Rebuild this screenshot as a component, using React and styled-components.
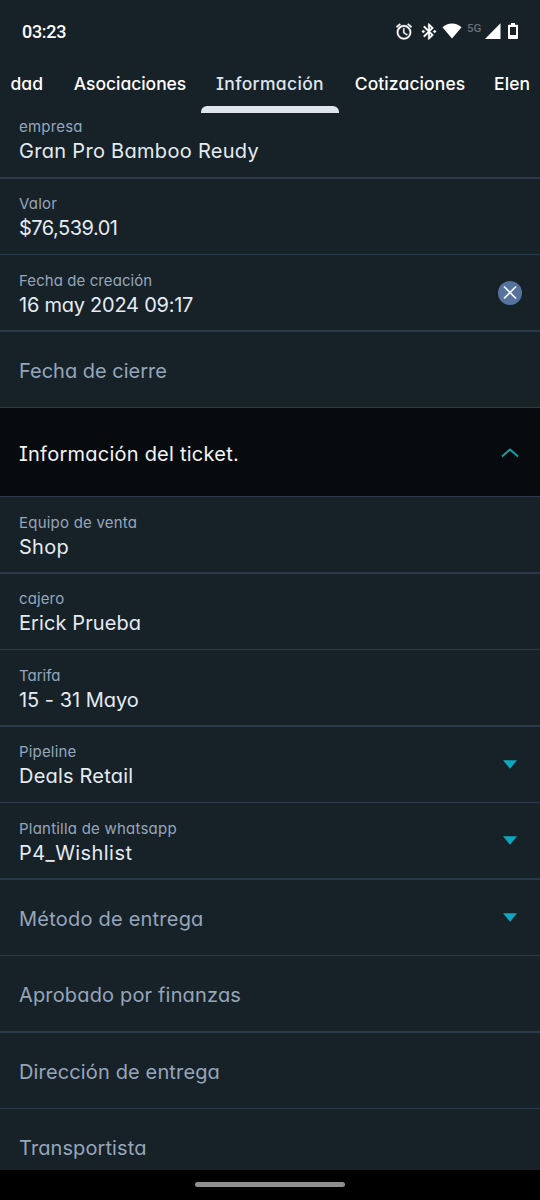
import React from 'react';
import styled, { createGlobalStyle } from 'styled-components';

const GlobalStyle = createGlobalStyle`
  * { box-sizing: border-box; }
  body {
    margin: 0;
    background: #172128;
    font-family: Inter, "Liberation Sans", sans-serif;
    font-feature-settings: "cv08", "cv11";
  }
`;

const Screen = styled.div`
  width: 540px;
  height: 1200px;
  display: flex;
  flex-direction: column;
  overflow: hidden;
  background: #172128;
`;

const StatusBar = styled.header`
  height: 62px;
  flex: none;
  display: flex;
  align-items: center;
  justify-content: space-between;
  padding: 0 22px;
`;

const Clock = styled.span`
  font: 500 18px/24px Roboto, sans-serif;
  letter-spacing: -0.3px;
  padding-top: 1px;
  color: #fff;
`;

const StatusIcons = styled.div`
  display: flex;
  align-items: center;
  height: 24px;
  svg { display: block; fill: #fff; }
`;

const IconGap = styled.span`
  width: ${p => p.$w}px;
`;

const Network = styled.span`
  font: 500 11.5px/12px Roboto, sans-serif;
  color: #687078;
  margin-bottom: 7px;
  width: 18px;
`;

const Tabs = styled.nav`
  height: 51px;
  flex: none;
  display: flex;
`;

const Tab = styled.div`
  flex: none;
  width: ${p => p.$width}px;
  display: flex;
  flex-direction: column;
  align-items: ${p => p.$align || 'center'};
  justify-content: space-between;
  padding: 10px 0 0 ${p => p.$inset || 0}px;
  white-space: nowrap;
  font-size: 17.5px;
  line-height: 24px;
  font-weight: 500;
  letter-spacing: ${p => p.$track}px;
  color: ${p => (p.$active ? '#dfe5ed' : '#fff')};
`;

const Indicator = styled.span`
  width: 138px;
  height: 7px;
  border-radius: 6px 6px 0 0;
  background: #dfe5ed;
`;

const Fields = styled.main`
  flex: 1;
  min-height: 0;
  overflow: hidden;
`;

const Row = styled.div`
  height: ${p => p.$height}px;
  margin-top: ${p => p.$offset || 0}px;
  border-bottom: ${p => p.$line}px solid #2c3947;
  display: flex;
  align-items: center;
  justify-content: space-between;
  padding: 0 18px 0 19px;
`;

const Texts = styled.div`
  display: flex;
  flex-direction: column;
  padding-top: ${p => p.$top}px;
`;

const Label = styled.span`
  font-size: 15px;
  line-height: 20px;
  letter-spacing: ${p => p.$track}px;
  color: #95a6bb;
  white-space: nowrap;
`;

const Value = styled.span`
  font-size: 20px;
  line-height: 28px;
  letter-spacing: ${p => p.$track}px;
  color: #e4ebf2;
  white-space: nowrap;
`;

const Placeholder = styled(Value)`
  padding-top: 2px;
  color: #95a6bb;
`;

const Section = styled(Row)`
  background: #070b0e;
  padding-top: 2px;
`;

const SectionTitle = styled(Value)`
  padding-top: 1px;
  color: #f2f4f5;
`;

const IconSlot = styled.span`
  width: 24px;
  height: 24px;
  display: flex;
  align-items: center;
  justify-content: center;
`;

const NavBar = styled.footer`
  height: 30px;
  flex: none;
  display: flex;
  justify-content: center;
  padding-top: 12px;
  background: #000;
`;

const NavPill = styled.span`
  width: 150px;
  height: 5px;
  border-radius: 3px;
  background: #8f8f8f;
`;

const AlarmIcon = () => (
  <svg width="16" height="17" viewBox="2 1.5 20 21" stroke="#fff" strokeWidth="0.4">
    <path d="M22 5.72l-4.6-3.86-1.29 1.53 4.6 3.86L22 5.72zM7.88 3.39L6.6 1.86 2 5.71l1.29 1.53 4.59-3.85zM12.5 8H11v6l4.75 2.85.75-1.23-4-2.37V8zM12 4c-4.97 0-9 4.03-9 9s4.02 9 9 9a9 9 0 0 0 0-18zm0 16c-3.87 0-7-3.13-7-7s3.13-7 7-7 7 3.13 7 7-3.13 7-7 7z" />
  </svg>
);

const BluetoothIcon = () => (
  <svg width="16" height="17" viewBox="3.5 1.5 17 21" stroke="#fff" strokeWidth="0.4">
    <path d="M7 12l-2-2-2 2 2 2 2-2zm10.71-4.29L12 2h-1v7.59L6.41 5 5 6.41 10.59 12 5 17.59 6.41 19 11 14.41V22h1l5.71-5.71-4.3-4.29 4.3-4.29zM13 5.83l1.88 1.88L13 9.59V5.83zm1.88 10.46L13 18.17v-3.76l1.88 1.88zM19 10l-2 2 2 2 2-2-2-2z" />
  </svg>
);

const WifiIcon = () => (
  <svg width="20" height="16" viewBox="0 0 20 16">
    <path d="M10 15.6L.4 4.2C3 1.7 6.3 .4 10 .4s7 1.3 9.6 3.8z" />
  </svg>
);

const SignalIcon = () => (
  <svg width="16" height="16" viewBox="0 0 16 16">
    <path d="M15.5 .2V16H0z" />
  </svg>
);

const BatteryIcon = () => (
  <svg width="10" height="16" viewBox="0 0 10 16">
    <path fillRule="evenodd" d="M3 0h4v1.700h2.200q.8 0 .8.800v12.700q0 .8-.8.800H.8q-.8 0-.8-.8V2.500q0-.8.8-.8H3zM2 4v8h6V4z" />
  </svg>
);

const ClearIcon = () => (
  <svg width="24" height="24" viewBox="0 0 24 24">
    <circle cx="12" cy="12" r="12" fill="#56749b" />
    <path d="M6 5.500l12 12m0-12l-12 12" stroke="#f2f6fa" strokeWidth="1.700" />
  </svg>
);

const ChevronUp = () => (
  <svg width="18" height="10" viewBox="0 0 18 10" fill="none">
    <path d="M1 8.500l8-7 8 7" stroke="#13a0ac" strokeWidth="1.900" />
  </svg>
);

const Caret = () => (
  <svg width="14" height="9" viewBox="0 0 14 9">
    <path d="M0 .3h14L7 8.700z" fill="#0fa6be" />
  </svg>
);

const fields = [
  { label: 'empresa', lt: 0.2, value: 'Gran Pro Bamboo Reudy', vt: 0.3, height: 76, line: 2, offset: -10, top: 2 },
  { label: 'Valor', lt: 0.2, value: '$76,539.01', vt: -0.5, height: 76, line: 1 },
  { label: 'Fecha de creación', lt: 0.08, value: '16 may 2024 09:17', vt: -0.24, height: 77, line: 2, top: 5, icon: <ClearIcon /> },
  { placeholder: 'Fecha de cierre', vt: 0, height: 76, line: 1 },
  { section: 'Información del ticket.', vt: 0.24, height: 89, line: 1, icon: <ChevronUp /> },
  { label: 'Equipo de venta', lt: 0.22, value: 'Shop', vt: 0.25, height: 77, line: 2, top: 5 },
  { label: 'cajero', lt: 0.12, value: 'Erick Prueba', vt: 0.1, height: 76, line: 1 },
  { label: 'Tarifa', lt: 0, value: '15 - 31 Mayo', vt: -0.02, height: 77, line: 2, top: 5 },
  { label: 'Pipeline', lt: 0.18, value: 'Deals Retail', vt: 0.2, height: 76, line: 1, icon: <Caret /> },
  { label: 'Plantilla de whatsapp', lt: 0.22, value: 'P4_Wishlist', vt: 0.44, height: 77, line: 2, top: 5, icon: <Caret /> },
  { placeholder: 'Método de entrega', vt: 0.22, height: 76, line: 1, icon: <Caret /> },
  { placeholder: 'Aprobado por finanzas', vt: 0.16, height: 77, line: 2 },
  { placeholder: 'Dirección de entrega', vt: 0.14, height: 76, line: 1 },
  { placeholder: 'Transportista', vt: 0.1, height: 77, line: 2 },
];

function Field({ item }) {
  const Container = item.section ? Section : Row;
  return (
    <Container $height={item.height} $line={item.line} $offset={item.offset}>
      {item.section && <SectionTitle $track={item.vt}>{item.section}</SectionTitle>}
      {item.placeholder && <Placeholder $track={item.vt}>{item.placeholder}</Placeholder>}
      {item.value && (
        <Texts $top={item.top || 3}>
          <Label $track={item.lt}>{item.label}</Label>
          <Value $track={item.vt}>{item.value}</Value>
        </Texts>
      )}
      {item.icon && <IconSlot>{item.icon}</IconSlot>}
    </Container>
  );
}

export default function App() {
  return (
    <>
      <GlobalStyle />
      <Screen>
        <StatusBar>
          <Clock>03:23</Clock>
          <StatusIcons>
            <AlarmIcon />
            <IconGap $w={9} />
            <BluetoothIcon />
            <IconGap $w={5} />
            <WifiIcon />
            <IconGap $w={5} />
            <Network>5G</Network>
            <SignalIcon />
            <IconGap $w={7} />
            <BatteryIcon />
          </StatusIcons>
        </StatusBar>
        <Tabs>
          <Tab $width={43} $align="flex-end" $track={0}>dad</Tab>
          <Tab $width={158} $inset={16} $track={-0.04}>Asociaciones</Tab>
          <Tab $width={138} $track={0.35} $active>
            Información
            <Indicator />
          </Tab>
          <Tab $width={142} $track={0.1}>Cotizaciones</Tab>
          <Tab $width={59} $align="flex-start" $inset={13} $track={0.1}>Elen</Tab>
        </Tabs>
        <Fields>
          {fields.map(f => (
            <Field key={f.label || f.placeholder || f.section} item={f} />
          ))}
        </Fields>
        <NavBar>
          <NavPill />
        </NavBar>
      </Screen>
    </>
  );
}
